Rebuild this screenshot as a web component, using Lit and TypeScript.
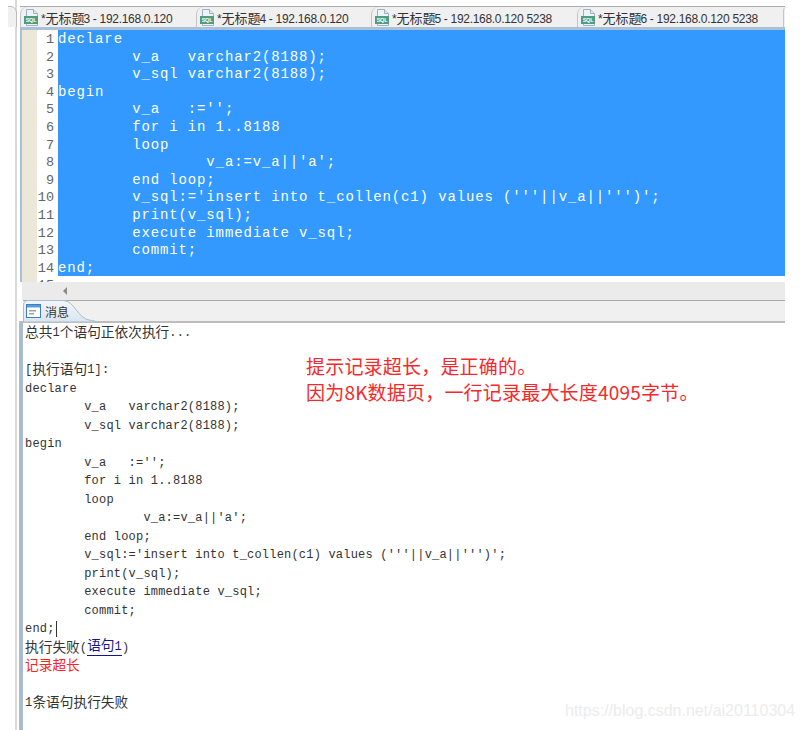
import { LitElement, html, css, svg } from "lit";
import { customElement } from "lit/decorators.js";

const editorLines = [
  "declare",
  "        v_a   varchar2(8188);",
  "        v_sql varchar2(8188);",
  "begin",
  "        v_a   :='';",
  "        for i in 1..8188",
  "        loop",
  "                v_a:=v_a||'a';",
  "        end loop;",
  "        v_sql:='insert into t_collen(c1) values (\'\'\'||v_a||\'\'\')';",
  "        print(v_sql);",
  "        execute immediate v_sql;",
  "        commit;",
  "end;",
];

const tabs = [
  ["3", " - 192.168.0.120"],
  ["4", " - 192.168.0.120"],
  ["5", " - 192.168.0.120 5238"],
  ["6", " - 192.168.0.120 5238"],
];

const sqlIcon = svg`<svg class="ico" width="15" height="17" viewBox="0 0 15 17">
  <path d="M2.5 .5H9.5L13.5 4.5V16.5H2.5Z" fill="#eef3f8" stroke="#9fb2c4"/>
  <path d="M9.5 .5V4.5H13.5" fill="#dfe7ee" stroke="#9fb2c4"/>
  <rect x="0" y="7" width="14" height="8" fill="#4f9c80"/>
  <text x="7" y="13" text-anchor="middle" font-family="Liberation Sans" font-size="5.6" font-weight="700" fill="#fff">SQL</text>
</svg>`;

const msgIcon = svg`<svg class="ico" width="15" height="14" viewBox="0 0 15 14">
  <rect x=".5" y=".5" width="14" height="13" fill="#fff" stroke="#3f7fbe"/>
  <rect x="1" y="1" width="13" height="2.5" fill="#5a9bd8"/>
  <rect x="3" y="6" width="7" height="1.5" fill="#9aa4ae"/>
  <rect x="3" y="9" width="5" height="1.5" fill="#9aa4ae"/>
</svg>`;

const msgShape = svg`<svg class="shape" width="72" height="22" viewBox="0 0 72 22">
  <defs><linearGradient id="mt" x1="0" y1="0" x2="0" y2="1"><stop offset="0" stop-color="#f4f6f8"/><stop offset="1" stop-color="#d8e5f2"/></linearGradient></defs>
  <path d="M.5 22V5.5Q.5 .5 5.5 .5H40C52 .5 54 19 68 20.5L72 21V22Z" fill="url(#mt)" stroke="#a9bccd"/>
</svg>`;

const cornerCurve = svg`<svg class="corner" width="12" height="21" viewBox="0 0 12 21">
  <path d="M0 .5H3Q7 .5 8.5 6V21H0Z" fill="#f0f0f0"/>
  <path d="M0 .5H3Q7 .5 8.5 6V21" fill="none" stroke="#bdbdbd"/>
</svg>`;

@customElement("app-root")
export class AppRoot extends LitElement {
  static styles = css`
    :host { display: block; width: 804px; height: 730px; background: #fff; overflow: hidden; position: relative; }
    .corner { position: absolute; left: 8px; top: 6px; }
    .window { width: 770px; height: 730px; margin-left: 15px; padding-top: 6px; box-sizing: border-box; display: flex; flex-direction: column; background: linear-gradient(90deg, #d9d9d9 0 2px, #fff 2px); }
    .tabbar { height: 21px; margin-left: 5px; border-top: 1px solid #ababab; background: #f0f0f0; display: flex; box-sizing: border-box; flex: none; }
    .tab { width: 176px; flex: none; box-sizing: border-box; padding-left: 3px; display: flex; align-items: center; gap: 2px; border-left: 1px solid #c4c4c4; border-top-left-radius: 7px; font: 12px "Liberation Sans", "Noto Sans CJK SC", sans-serif; letter-spacing: -.3px; color: #333; white-space: pre; height: 20px; }
    .tab:nth-child(2) { width: 175px; }
    .tab:nth-child(3), .tab:nth-child(4) { width: 206px; }
    .tab:last-child { flex: 1; width: auto; }
    .tab .cjk { font-size: 13px; letter-spacing: 0; margin-right: -1px; }
    .ico { flex: none; display: block; }
    .editor { height: 255px; flex: none; margin-left: 5px; border-top: 3px solid #a9c0d6; border-left: 2px solid #a9c0d6; display: flex; box-sizing: border-box; background: #fff; overflow: hidden; }
    .margin { width: 15px; flex: none; background: #ebe8d9; }
    .nums { width: 21px; flex: none; padding: 1px 4px 0 0; box-sizing: border-box; text-align: right; color: #666; font: 13.5px/17.6px "Liberation Mono", monospace; overflow: hidden; height: 252px; }
    .code { flex: 1; min-width: 0; height: 246px; padding-top: 1px; box-sizing: border-box; overflow: hidden; background: #3399ff; color: #fff; font: 14px/17.6px "Liberation Mono", monospace; white-space: pre; letter-spacing: .87px; }
    .hscroll { height: 18px; margin-left: 7px; background: #ebebeb; flex: none; display: flex; align-items: center; padding-left: 41px; box-sizing: border-box; }
    .arrow { width: 0; height: 0; border: 4px solid transparent; border-right: 4px solid #8a8a8a; border-left: 0; }
    .msgbar { height: 23px; margin-left: 4px; background: linear-gradient(90deg, #fff 0 4px, #f0f0f0 4px); flex: none; box-sizing: border-box; position: relative; border-bottom: 2px solid #bdbdbd; }
    .topline { position: absolute; left: 4px; right: 0; top: 0; height: 1px; background: #ababab; }
    .msgtab { position: relative; width: 72px; height: 21px; display: flex; align-items: center; gap: 4px; padding: 1px 0 0 7px; box-sizing: border-box; font: 12px "Noto Sans CJK SC", sans-serif; color: #333; }
    .shape { position: absolute; left: 4px; top: 0; }
    .msgtab .ico, .msgtab span { position: relative; }
    .output { flex: 1; margin-left: 4px; border-left: 4px solid #a9bccd; padding-left: 2px; position: relative; color: #333; }
    .ln { height: 18.5px; padding-top: 2px; box-sizing: border-box; font: 12px/16.5px "Liberation Mono", monospace; letter-spacing: .2px; white-space: pre; display: flex; align-items: center; color: #333; }
    .zh { font: 13.7px/16.5px "Noto Sans CJK SC", sans-serif; letter-spacing: 0; margin-top: -4px; }
    .link { color: #15158c; border-bottom: 1px solid #15158c; line-height: 15px; margin-top: -4px; }
    .link .zh { margin-top: 0; }
    .red { color: #f22; }
    .caret { width: 1px; height: 16px; background: #333; margin-left: 1px; }
    .note { position: absolute; left: 283px; top: 30px; color: #f5292b; font: 19px/26px "Noto Sans CJK SC", sans-serif; letter-spacing: .2px; white-space: pre; }
    .mark { position: absolute; left: 565px; top: 702px; font: 16px "Liberation Sans", sans-serif; color: #ececec; white-space: pre; }
  `;

  render() {
    return html`
      ${cornerCurve}
      <div class="window">
        <div class="tabbar">
          ${tabs.map((t) => html`<div class="tab">${sqlIcon}<span>*<span class="cjk">无标题</span>${t[0]}${t[1]}</span></div>`)}
          <div class="tab"></div>
        </div>
        <div class="editor">
          <div class="margin"></div>
          <div class="nums">${[...editorLines, ""].map((_, i) => html`<div>${i + 1}</div>`)}</div>
          <div class="code">${editorLines.map((l) => html`<div>${l}</div>`)}</div>
        </div>
        <div class="hscroll"><div class="arrow"></div></div>
        <div class="msgbar"><div class="topline"></div>${msgShape}<div class="msgtab">${msgIcon}<span>消息</span></div></div>
        <div class="output">
          <div class="ln"><span class="zh">总共</span>1<span class="zh">个语句正依次执行</span>...</div>
          <div class="ln"></div>
          <div class="ln">[<span class="zh">执行语句</span>1]:</div>
          ${editorLines.map((l, i) => html`<div class="ln">${l}${i === editorLines.length - 1 ? html`<span class="caret"></span>` : ""}</div>`)}
          <div class="ln"><span class="zh">执行失败</span>(<span class="link"><span class="zh">语句</span>1</span>)</div>
          <div class="ln red"><span class="zh">记录超长</span></div>
          <div class="ln"></div>
          <div class="ln">1<span class="zh">条语句执行失败</span></div>
          <div class="note">提示记录超长，是正确的。
因为8K数据页，一行记录最大长度4095字节。</div>
        </div>
      </div>
      <div class="mark">https://blog.csdn.net/ai20110304</div>
    `;
  }
}
